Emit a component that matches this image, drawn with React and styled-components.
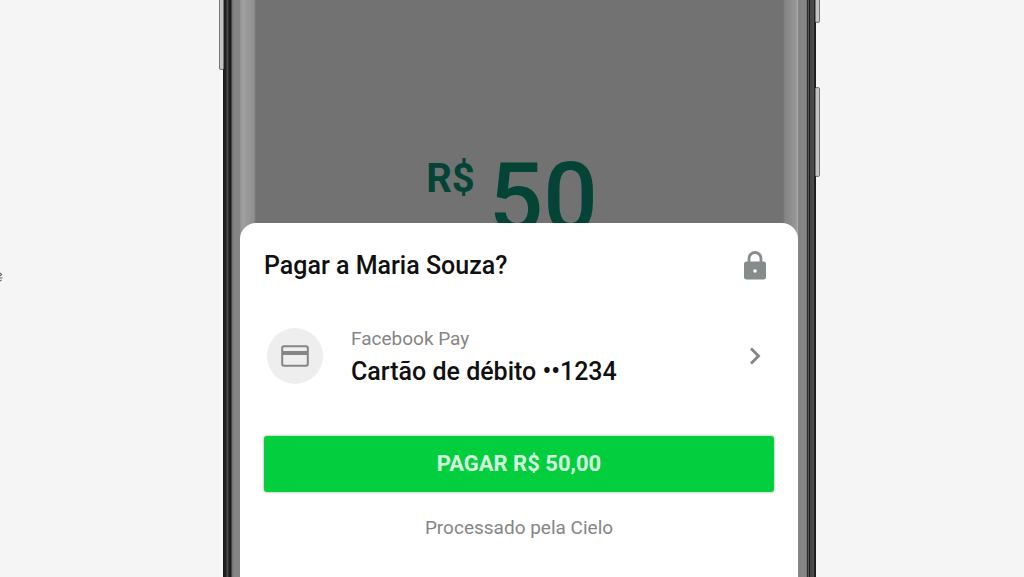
import styled, { createGlobalStyle } from "styled-components";

export default function App(){
    return (
        <>
            <GlobalStyle />
            <Page>
                <PointerIcon />
                <Phone>
                    <SideKey $side="left" $top="-30px" $height="100px" />
                    <SideKey $side="right" $top="-70px" $height="93px" />
                    <SideKey $side="right" $top="87px" $height="90px" />
                    <Screen>
                        <Amount>
                            <Currency>R$</Currency>
                            <Value>50</Value>
                        </Amount>
                        <Sheet>
                            <Header>
                                <h1>Pagar a Maria Souza?</h1>
                                <LockIcon />
                            </Header>
                            <Method type="button">
                                <Circle><CardIcon /></Circle>
                                <MethodText>
                                    <small>Facebook Pay</small>
                                    <strong>Cartão de débito ••1234</strong>
                                </MethodText>
                                <ChevronIcon />
                            </Method>
                            <PayButton type="button">PAGAR R$ 50,00</PayButton>
                            <Footer>Processado pela Cielo</Footer>
                        </Sheet>
                    </Screen>
                </Phone>
            </Page>
        </>
    )
}

function LockIcon(){
    return (
        <svg width="24" height="30" viewBox="0 0 24 30" aria-hidden="true">
            <path d="M6 12V7.500a6 6 0 0 1 12 0V12" fill="none" stroke="#868b8c" strokeWidth="2.800" />
            <rect x="1" y="10.500" width="22" height="18" rx="2.500" fill="#868b8c" />
            <circle cx="12" cy="20" r="1.800" fill="#ffffff" />
        </svg>
    )
}

function CardIcon(){
    return (
        <svg width="28" height="22" viewBox="0 0 28 22" aria-hidden="true">
            <rect x="1.200" y="1.200" width="25.600" height="19.600" rx="1.800" fill="none" stroke="#858585" strokeWidth="2" />
            <path d="M1 8h26" stroke="#858585" strokeWidth="4" />
        </svg>
    )
}

function ChevronIcon(){
    return (
        <svg width="12" height="18" viewBox="0 0 12 18" aria-hidden="true">
            <path d="M2 1.500 9.500 9 2 16.500" fill="none" stroke="#858585" strokeWidth="2.800" />
        </svg>
    )
}

function PointerIcon(){
    return (
        <Pointer width="4" height="12" viewBox="0 0 4 12" aria-hidden="true">
            <path d="M0 2 1.500 3.500 0 5M0 7h2.500M0 10l1.500-1" fill="none" stroke="#666666" strokeWidth="1.200" />
        </Pointer>
    )
}

const GlobalStyle = createGlobalStyle`
    *{
        box-sizing: border-box;
    }

    body{
        margin: 0;
        background: #f5f5f5;
        font-family: Roboto, "Liberation Sans", sans-serif;
    }

    h1, p{
        margin: 0;
    }

    button{
        border: none;
        font-family: inherit;
        cursor: pointer;
    }
`;

const Page = styled.main`
    position: relative;
    min-height: 100vh;
    padding-left: 15px;
    overflow: hidden;

    display: flex;
    justify-content: center;
`;

const Pointer = styled.svg`
    position: absolute;
    left: 0;
    top: 271px;
`;

const Phone = styled.div`
    position: relative;
    width: 100%;
    max-width: 593px;
    padding: 0 18px 0 17px;
    background:
        linear-gradient(to right, #151515 0, #222222 3px, #4c4c4c 4px, #444444 5px, #1c1c1c 6px, #1c1c1c 8px, #707070 9px, #858585 11px, #858585 17px, transparent 17px) left / 50% 100% no-repeat,
        linear-gradient(to left, #151515 0, #222222 2px, #4c4c4c 3px, #444444 6px, #1c1c1c 7px, #555555 8px, #2c2c2c 9px, #777777 10px, #858585 11px, #858585 18px, transparent 18px) right / 50% 100% no-repeat;

    display: flex;
`;

const SideKey = styled.span`
    position: absolute;
    top: ${props => props.$top};
    ${props => props.$side}: -4px;
    width: 5px;
    height: ${props => props.$height};
    border: 1px solid #777777;
    border-radius: 2px;
    background: #c4c4c4;
`;

const Screen = styled.div`
    flex: 1;
    background: linear-gradient(to right, #929292 0, #a0a0a0 3px, #8e8e8e 14px, #727272 16px, #727272 calc(100% - 15px), #858585 calc(100% - 13px), #969696 calc(100% - 2px), #adadad 100%);

    display: flex;
    flex-direction: column;
`;

const Amount = styled.div`
    flex: 0 0 223px;
    padding: 145px 14px 0 0;
    overflow: hidden;
    color: #034437;

    display: flex;
    justify-content: center;
    align-items: flex-start;
    gap: 14px;
`;

const Currency = styled.span`
    margin-top: 9px;
    font-weight: 700;
    font-size: 40px;
    line-height: 50px;
`;

const Value = styled.span`
    font-weight: 500;
    font-size: 96px;
    line-height: 106px;
`;

const Sheet = styled.section`
    flex: 1;
    padding: 28px 24px 24px;
    border-radius: 16px 16px 0 0;
    background: #ffffff;

    display: flex;
    flex-direction: column;
`;

const Header = styled.header`
    padding-right: 7px;

    display: flex;
    justify-content: space-between;
    align-items: center;

    h1{
        font-weight: 500;
        font-size: 25px;
        line-height: 30px;
        color: #101010;
    }
`;

const Method = styled.button`
    margin-top: 42px;
    padding: 0 13px 0 3px;
    background: none;
    text-align: left;

    display: flex;
    align-items: center;
    gap: 28px;
`;

const Circle = styled.span`
    width: 56px;
    height: 56px;
    border-radius: 50%;
    background: #eeeeee;

    display: flex;
    justify-content: center;
    align-items: center;
`;

const MethodText = styled.span`
    flex: 1;

    display: flex;
    flex-direction: column;

    small{
        font-size: 19px;
        line-height: 32px;
        color: #858585;
    }

    strong{
        font-weight: 500;
        font-size: 25px;
        line-height: 34px;
        color: #101010;
    }
`;

const PayButton = styled.button`
    height: 56px;
    margin-top: 47px;
    border-radius: 3px;
    background: #03ce3e;
    box-shadow: 0 0 3px rgba(0, 0, 0, 0.4);

    font-weight: 700;
    font-size: 22px;
    line-height: 28px;
    color: #d5fbdf;
`;

const Footer = styled.p`
    margin-top: 24px;
    font-size: 19px;
    line-height: 24px;
    text-align: center;
    color: #858585;
`;
